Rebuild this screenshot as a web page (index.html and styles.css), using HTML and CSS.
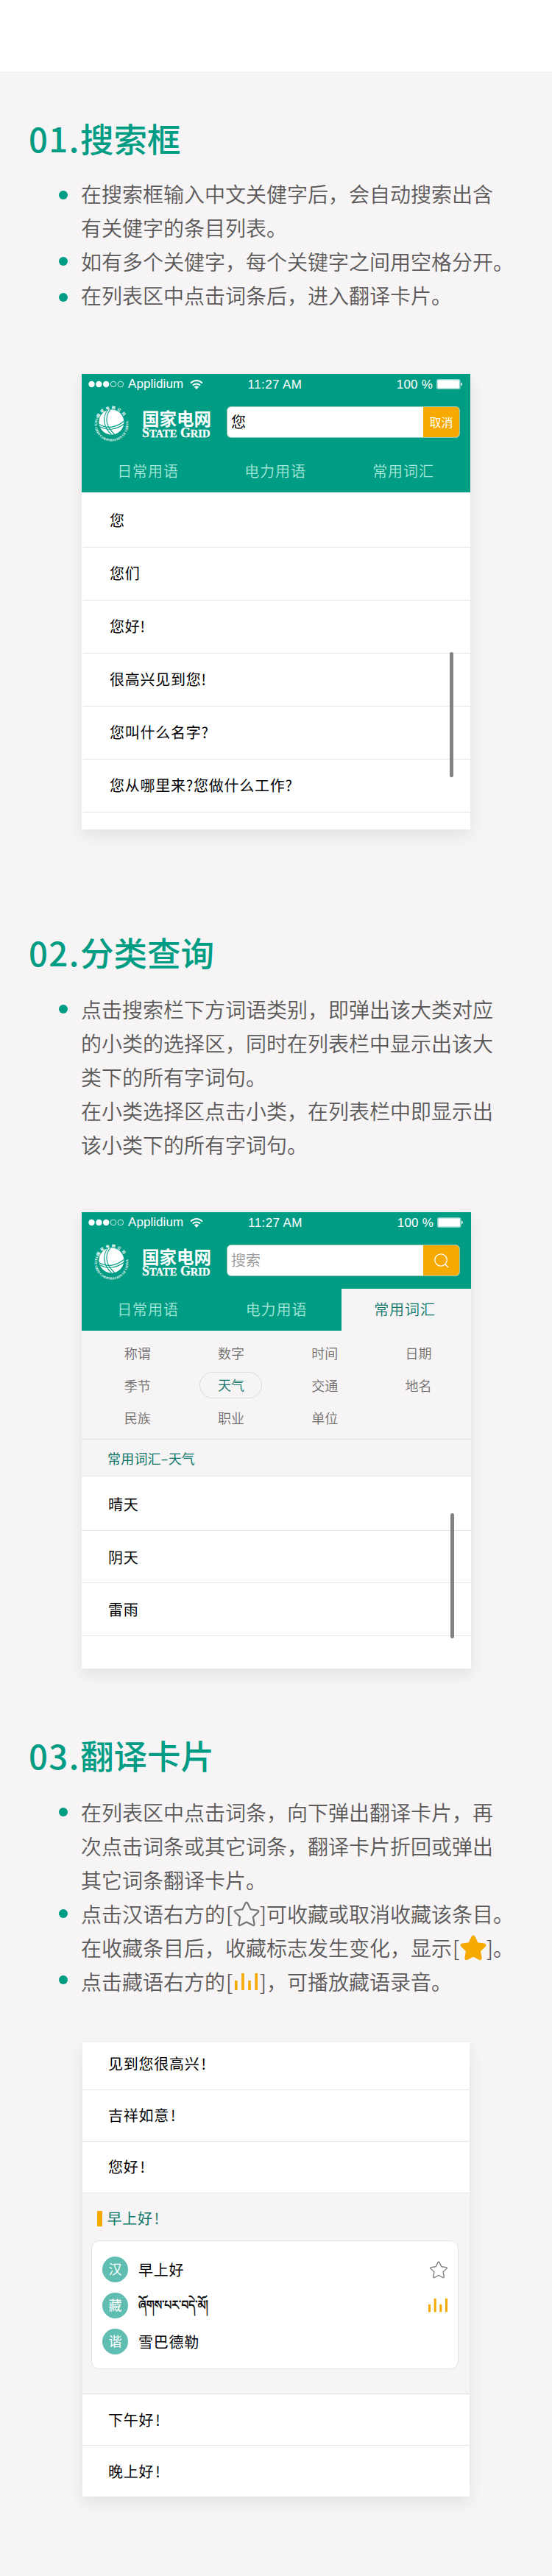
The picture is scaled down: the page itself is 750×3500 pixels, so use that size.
FILE: index.html
```html
<!DOCTYPE html>
<html lang="zh-CN">
<head>
<meta charset="utf-8">
<title>使用说明</title>
<link rel="stylesheet" href="styles.css">
</head>
<body>
<svg class="defs" width="0" height="0" aria-hidden="true">
  <symbol id="wifi" viewBox="0 0 18 13">
    <path d="M1 4.6Q9-2.4 17 4.6M3.8 7.6Q9 3.2 14.2 7.6" fill="none" stroke="#fff" stroke-width="1.9"/>
    <path d="M5.8 9.6Q9 7 12.2 9.6L9 13Z" fill="#fff"/>
  </symbol>
  <symbol id="battery" viewBox="0 0 35 14">
    <rect x="0" y="0" width="32.5" height="14" rx="2.5" fill="#fff" opacity=".55"/>
    <rect x="1.6" y="1.6" width="29.3" height="10.8" rx="1" fill="#fff"/>
    <path d="M33 4.5q1.8.6 1.8 2.5t-1.8 2.5z" fill="#fff"/>
  </symbol>
  <symbol id="dots" viewBox="0 0 50 10">
    <g fill="#fff"><circle cx="5.5" cy="5" r="4.2"/><circle cx="15.4" cy="5" r="4.2"/><circle cx="25.2" cy="5" r="4.2"/></g>
    <g fill="none" stroke="#fff" stroke-width=".8"><circle cx="35" cy="5" r="3.8"/><circle cx="44.8" cy="5" r="3.8"/></g>
  </symbol>
  <symbol id="globe" viewBox="0 0 48 50">
    <circle cx="23.4" cy="24.5" r="17" fill="#fff"/>
    <g fill="none" stroke="#009c84" stroke-width="1.1">
      <path d="M18.5 8C11 17 12 31 23.500 41.5"/>
      <path d="M22 7.500C14 17 15 30 27.500 41"/>
      <path d="M7 27.500C17 34 30 32 40 23.500"/>
      <path d="M7.5 30.500C18 37 31 34.500 40.5 27"/>
    </g>
  </symbol>
  <symbol id="star" viewBox="0 0 24 24">
    <path d="M11 1.900Q12 .200 13 1.900L15.800 7.700L22.200 8.600Q24 9 22.700 10.400L18.100 14.900L19.200 21.300Q19.300 23.200 17.700 22.500L12 19.500L6.300 22.500Q4.700 23.200 4.800 21.300L5.900 14.900L1.300 10.400Q0 9 1.800 8.600L8.200 7.700Z"/>
  </symbol>
  <symbol id="bars" viewBox="0 0 26 18.500" preserveAspectRatio="none">
    <path d="M0 8h3v10.500H0zM7.700 0h3v18.500h-3zM15.300 8h3v10.500h-3zM23 0h3v18.500h-3z" fill="#f6a900"/>
  </symbol>
</svg>

<main class="page">
  <section class="section section-1">
    <h2 class="title"><span class="num">01.</span>搜索框</h2>
    <ul class="notes">
      <li>在搜索框输入中文关健字后，会自动搜索出含<br>有关健字的条目列表。</li>
      <li>如有多个关健字，每个关键字之间用空格分开。</li>
      <li>在列表区中点击词条后，进入翻译卡片。</li>
    </ul>
    <div class="phone phone-1">
      <header class="app-head">
        <div class="status">
          <div class="carrier"><svg class="i-dots"><use href="#dots"/></svg><span>Applidium</span><svg class="i-wifi"><use href="#wifi"/></svg></div>
          <span class="time">11:27 AM</span>
          <div class="power"><span>100 %</span><svg class="i-battery"><use href="#battery"/></svg></div>
        </div>
        <div class="bar">
          <svg class="i-logo" viewBox="0 0 160 50">
            <path id="top-1" d="M5.8 19.5A18.8 18.8 0 0 1 41.4 19.5" fill="none"/>
            <path id="ring-1" d="M4.3 15.5A22.8 22.8 0 1 0 42.7 15.5" fill="none"/>
            <text class="ring-cn"><textPath href="#top-1" startOffset="1" textLength="42">国家电网公司</textPath></text>
            <text class="ring-en"><textPath href="#ring-1" startOffset="1" textLength="88">STATE GRID CORPORATION OF CHINA</textPath></text>
            <use href="#globe" width="48" height="50"/>
            <text class="brand-cn" x="65" y="28.500" textLength="94" lengthAdjust="spacingAndGlyphs">国家电网</text>
            <text class="brand-en" x="65" y="44.600" textLength="92.500" lengthAdjust="spacingAndGlyphs">S<tspan class="sc">TATE</tspan> G<tspan class="sc">RID</tspan></text>
          </svg>
          <div class="search"><span class="query">您</span><span class="action">取消</span></div>
        </div>
        <nav class="tabs"><span>日常用语</span><span>电力用语</span><span>常用词汇</span></nav>
      </header>
      <div class="list">
        <div class="row">您</div>
        <div class="row">您们</div>
        <div class="row">您好!</div>
        <div class="row">很高兴见到您!</div>
        <div class="row">您叫什么名字?</div>
        <div class="row">您从哪里来?您做什么工作?</div>
      </div>
      <i class="scroll"></i>
    </div>
  </section>

  <section class="section section-2">
    <h2 class="title"><span class="num">02.</span>分类查询</h2>
    <ul class="notes">
      <li>点击搜索栏下方词语类别，即弹出该大类对应<br>的小类的选择区，同时在列表栏中显示出该大<br>类下的所有字词句。<br>在小类选择区点击小类，在列表栏中即显示出<br>该小类下的所有字词句。</li>
    </ul>
    <div class="phone phone-2">
      <header class="app-head">
        <div class="status">
          <div class="carrier"><svg class="i-dots"><use href="#dots"/></svg><span>Applidium</span><svg class="i-wifi"><use href="#wifi"/></svg></div>
          <span class="time">11:27 AM</span>
          <div class="power"><span>100 %</span><svg class="i-battery"><use href="#battery"/></svg></div>
        </div>
        <div class="bar">
          <svg class="i-logo" viewBox="0 0 160 50">
            <path id="top-2" d="M5.8 19.5A18.8 18.8 0 0 1 41.4 19.5" fill="none"/>
            <path id="ring-2" d="M4.3 15.5A22.8 22.8 0 1 0 42.7 15.5" fill="none"/>
            <text class="ring-cn"><textPath href="#top-2" startOffset="1" textLength="42">国家电网公司</textPath></text>
            <text class="ring-en"><textPath href="#ring-2" startOffset="1" textLength="88">STATE GRID CORPORATION OF CHINA</textPath></text>
            <use href="#globe" width="48" height="50"/>
            <text class="brand-cn" x="65" y="28.500" textLength="94" lengthAdjust="spacingAndGlyphs">国家电网</text>
            <text class="brand-en" x="65" y="44.600" textLength="92.500" lengthAdjust="spacingAndGlyphs">S<tspan class="sc">TATE</tspan> G<tspan class="sc">RID</tspan></text>
          </svg>
          <div class="search"><span class="query hint">搜索</span><span class="action"><svg class="i-find" viewBox="0 0 20 20"><circle cx="9" cy="9" r="8.200"/><path d="M14.800 14.800L19.300 19.300"/></svg></span></div>
        </div>
        <nav class="tabs"><span>日常用语</span><span>电力用语</span><span class="active">常用词汇</span></nav>
      </header>
      <div class="cats">
        <span>称谓</span><span>数字</span><span>时间</span><span>日期</span>
        <span>季节</span><span class="picked">天气</span><span>交通</span><span>地名</span>
        <span>民族</span><span>职业</span><span>单位</span>
      </div>
      <div class="crumb">常用词汇–天气</div>
      <div class="list">
        <div class="row">晴天</div>
        <div class="row">阴天</div>
        <div class="row">雷雨</div>
      </div>
      <i class="scroll"></i>
    </div>
  </section>

  <section class="section section-3">
    <h2 class="title"><span class="num">03.</span>翻译卡片</h2>
    <ul class="notes">
      <li>在列表区中点击词条，向下弹出翻译卡片，再<br>次点击词条或其它词条，翻译卡片折回或弹出<br>其它词条翻译卡片。</li>
      <li>点击汉语右方的<span class="key">[<svg class="i-star"><use href="#star"/></svg>]</span>可收藏或取消收藏该条目。<br>在收藏条目后，收藏标志发生变化，显示<span class="key">[<svg class="i-star on"><use href="#star"/></svg>]</span>。</li>
      <li>点击藏语右方的<span class="key">[<svg class="i-bars"><use href="#bars"/></svg>]</span>，可播放藏语录音。</li>
    </ul>
    <div class="phone phone-3">
      <div class="list">
        <div class="row">见到您很高兴<b>!</b></div>
        <div class="row">吉祥如意<b>!</b></div>
        <div class="row">您好<b>!</b></div>
      </div>
      <div class="panel">
        <div class="panel-title">早上好<b>!</b></div>
        <div class="card">
          <div class="entry"><span class="tag">汉</span><span>早上好</span><svg class="s-star"><use href="#star"/></svg></div>
          <div class="entry"><span class="tag">藏</span><span class="tibetan" lang="bo">ཞོགས་པར་བདེ་མོ།</span><svg class="s-bars"><use href="#bars"/></svg></div>
          <div class="entry"><span class="tag">谐</span><span>雪巴德勒</span></div>
        </div>
      </div>
      <div class="list">
        <div class="row">下午好<b>!</b></div>
        <div class="row">晚上好<b>!</b></div>
      </div>
    </div>
  </section>
</main>
</body>
</html>
```
FILE: styles.css
```css
* { box-sizing: border-box; }
body {
  margin: 0;
  background: #fff;
  font-family: "Noto Sans CJK SC", sans-serif;
  color: #000;
}
.defs { position: absolute; }
svg { display: block; flex: none; }
b { font-weight: inherit; margin-left: 2px; }

.page { margin-top: 97px; height: 3403px; background: #f6f4f5; overflow: hidden; }
.section-1 { padding-top: 60px; height: 1166px; }
.section-2 { height: 1092px; }
.title {
  margin: 0 0 23px 39px;
  font-size: 45.500px;
  line-height: 60px;
  font-weight: 500;
  color: #009c84;
  white-space: nowrap;
}
.section-2 .title { margin-bottom: 25px; }
.section-3 .title { line-height: 58px; margin-bottom: 26px; }
.title .num { display: inline-block; width: 70px; letter-spacing: 1.400px; }

.notes { margin: 0; padding: 0; list-style: none; color: #5b5959; font-size: 28px; line-height: 46px; font-weight: 350; white-space: nowrap; }
.notes li { position: relative; margin-left: 80px; padding-left: 30px; }
.notes li::before {
  content: "";
  position: absolute;
  left: 0;
  top: 17px;
  width: 12px;
  height: 12px;
  border-radius: 50%;
  background: #009c84;
}
.section-1 .notes li:first-child::before { top: 19px; }
.section-1 .notes li:last-child::before { top: 20px; }
.section-3 .notes li:last-child::before { top: 15px; }
.key { display: inline-flex; width: 56px; height: 46px; justify-content: space-between; align-items: center; vertical-align: top; padding: 0 0 0 1px; }
.i-star { width: 36px; height: 35px; margin: 0 -4px; fill: none; stroke: #757575; stroke-width: 1.500; }
.i-star.on { fill: #f6a900; stroke: #f6a900; }
.i-bars { width: 31px; height: 23px; }

.phone {
  position: relative;
  margin-left: 111px;
  width: 528px;
  height: 619px;
  background: #fff;
  box-shadow: 0 8px 18px rgba(60, 40, 50, .09);
}
.phone-1 { margin-top: 84px; }
.phone-2 { margin-top: 69px; width: 529px; height: 620px; }
.phone-3 { margin: 60px 0 0 112px; width: 526px; height: 617px; }

.app-head { height: 161px; background: #009c84; color: #fff; }
.status {
  display: grid;
  grid-template-columns: 1fr auto 1fr;
  height: 30px;
  padding: 0 11px 0 8px;
  font: 17px/28px "Liberation Sans", sans-serif;
}
.carrier, .power { display: flex; align-items: center; height: 28px; }
.carrier span { margin: -1px 9px 0 5px; letter-spacing: .05px; }
.i-dots { width: 50px; height: 10px; }
.i-wifi { width: 18px; height: 13px; }
.time { padding-top: 1px; letter-spacing: .4px; }
.power { justify-content: flex-end; }
.power span { margin: 2px 5px 0 0; letter-spacing: .2px; }
.i-battery { width: 35px; height: 14px; }
.bar { display: flex; padding: 11px 14px 0 17px; height: 74px; }
.i-logo { width: 160px; height: 50px; overflow: visible; }
.ring-cn { font: bold 5px "Noto Sans CJK SC", sans-serif; fill: #fff; }
.ring-en { font: bold 4.500px "Liberation Serif", serif; fill: #fff; }
.brand-cn { font: bold 24px "Noto Sans CJK SC", sans-serif; fill: #fff; }
.brand-en { font: bold 19px "Liberation Serif", serif; fill: #fff; stroke: #fff; stroke-width: .3px; }
.sc { font-size: 15.500px; }
.search {
  display: flex;
  width: 317px;
  height: 43px;
  margin: 3px 0 0 20px;
  border: 1px solid #8cc7b4;
  border-radius: 6px;
  background: #fff;
  overflow: hidden;
  line-height: 39px;
}
.query { flex: 1; padding-left: 5px; font-size: 20px; color: #000; }
.hint { color: #999; font-weight: 350; }
.action { display: flex; justify-content: center; align-items: center; width: 49px; background: #f6a900; font-size: 16px; line-height: 39px; }
.i-find { width: 20px; height: 20px; fill: none; stroke: #fff; stroke-width: 1.300; }
.tabs { display: grid; grid-template-columns: 180px 170px 178px; height: 57px; font-size: 20px; font-weight: 350; letter-spacing: .9px; line-height: 55px; color: #a3e8d8; text-align: center; }
.tabs span + span { padding-right: 4px; }
.tabs .active { background: #f6f4f5; color: #0d7668; }
.phone-2 .tabs { grid-template-columns: 180px 173px 176px; }

.row { height: 72px; padding-left: 37px; line-height: 70px; border-bottom: 1px solid #e6e6e6; font-size: 20px; letter-spacing: .75px; }
.phone-1 .list { padding: 3px 0 0 2px; }
.phone-1 .row { padding-left: 36px; }
.scroll { position: absolute; left: 500px; top: 378px; width: 5px; height: 170px; border-radius: 3px; background: #808181; }
.phone-2 .scroll { left: 501px; top: 409px; }

.cats {
  display: grid;
  grid-template-columns: repeat(4, 127.300px);
  grid-auto-rows: 44px;
  height: 148px;
  padding: 8px 0 0 12px;
  background: #f6f4f5;
  border-bottom: 1px solid #dedcdd;
  font-size: 18px;
  font-weight: 350;
  line-height: 44px;
  color: #6f6d6d;
  text-align: center;
}
.cats .picked { width: 85px; height: 36px; margin: 4px auto 0; border: 1px solid #dcdadb; border-radius: 18px; line-height: 33px; color: #0d7668; }
.crumb { height: 50px; padding-left: 35px; background: #f6f4f5; border-bottom: 1px solid #e2e0e1; font-size: 18px; letter-spacing: .2px; line-height: 50px; color: #0d7668; }
.phone-2 .list { padding-top: 2px; }
.phone-2 .row { height: 71.500px; padding-left: 36px; line-height: 71px; }

.phone-3 .row { height: 70px; padding-left: 35px; line-height: 68px; }
.phone-3 .row:first-child { height: 65px; line-height: 57px; }
.phone-3 .panel + .list .row { height: 69.500px; line-height: 69px; }
.phone-3 .panel + .list .row:last-child { border: 0; }
.panel { height: 273px; padding: 24px 15px 0 12px; background: #f6f4f5; border-bottom: 1px solid #e2e0e1; }
.panel-title { height: 21px; margin-left: 7.500px; padding-left: 7px; border-left: 7.500px solid #f6a900; line-height: 20px; font-size: 20px; letter-spacing: .75px; color: #0d7668; }
.card { height: 175px; margin-top: 19px; padding: 14px 14px 0 14px; border: 1px solid #e3e1e2; border-radius: 11px; background: #fff; }
.entry { display: flex; align-items: center; height: 49px; font-size: 20px; letter-spacing: .75px; line-height: 30px; }
.tag { width: 35px; height: 35px; margin-right: 14px; border-radius: 50%; background: #5fbdb2; color: #fff; font-size: 18px; letter-spacing: 0; line-height: 33px; text-align: center; }
.s-star { width: 24px; height: 24px; margin-left: auto; fill: none; stroke: #777; stroke-width: 1.300; }
.s-bars { width: 26px; height: 18.500px; margin-left: auto; }
.tibetan {
  margin-top: 8px;
  font-family: "Noto Sans Tibetan", "Noto Serif Tibetan", "Noto Sans CJK SC", sans-serif;
  font-size: 18px;
  letter-spacing: 0;
  -webkit-text-stroke: .5px #000;
  transform: scaleX(.86);
  transform-origin: left;
}
```
